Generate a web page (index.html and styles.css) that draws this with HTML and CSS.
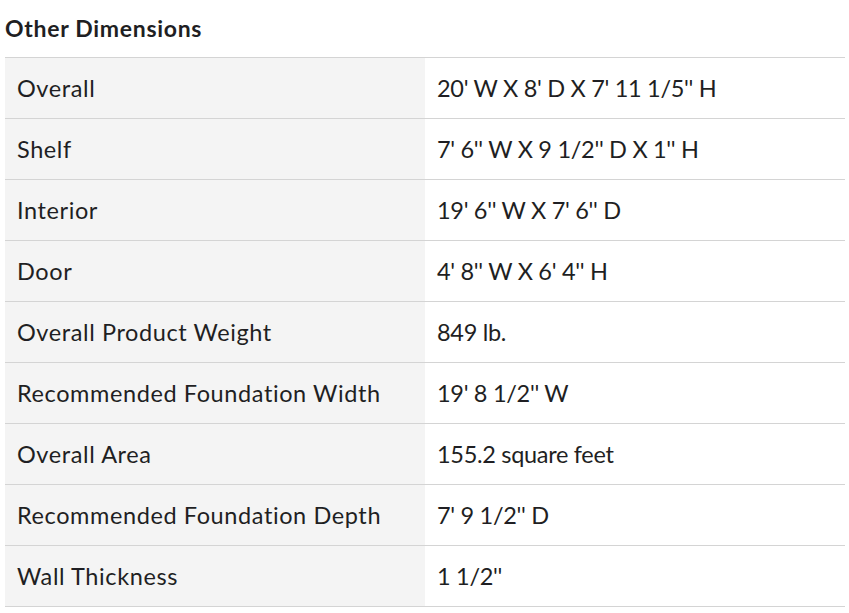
FILE: index.html
```html
<!DOCTYPE html>
<html>
<head>
<meta charset="utf-8">
<link rel="stylesheet" href="styles.css">
</head>
<body>
<section class="dims">
  <h2 class="dims-title">Other Dimensions</h2>
  <table class="dims-table">
    <tr><th>Overall</th><td>20' W X 8' D X 7' 11 1/5'' H</td></tr>
    <tr><th>Shelf</th><td>7' 6'' W X 9 1/2'' D X 1'' H</td></tr>
    <tr><th>Interior</th><td>19' 6'' W X 7' 6'' D</td></tr>
    <tr><th>Door</th><td>4' 8'' W X 6' 4'' H</td></tr>
    <tr><th>Overall Product Weight</th><td>849 lb.</td></tr>
    <tr><th>Recommended Foundation Width</th><td>19' 8 1/2'' W</td></tr>
    <tr><th>Overall Area</th><td>155.2 square feet</td></tr>
    <tr><th>Recommended Foundation Depth</th><td>7' 9 1/2'' D</td></tr>
    <tr><th>Wall Thickness</th><td>1 1/2''</td></tr>
  </table>
</section>
</body>
</html>
```
FILE: styles.css
```css
html, body {
  margin: 0;
  padding: 0;
  background: #fff;
}
body {
  font-family: "Lato", "Open Sans", sans-serif;
  color: #1f1f23;
}
.dims {
  padding: 0 4px 0 5px;
}
.dims-title {
  margin: 0;
  height: 57px;
  display: flex;
  align-items: center;
  font-size: 23px;
  font-weight: 700;
  letter-spacing: 0.7px;
  padding-bottom: 1px;
  box-sizing: border-box;
}
.dims-table {
  width: 100%;
  border-collapse: collapse;
  border-top: 1px solid #d4d4d4;
}
.dims-table tr {
  border-bottom: 1px solid #d4d4d4;
}
.dims-table th,
.dims-table td {
  height: 61px;
  padding: 0 12px;
  font-size: 23.5px;
  font-weight: 400;
  text-align: left;
  vertical-align: middle;
  box-sizing: border-box;
}
.dims-table th {
  width: 420px;
  background: #f4f4f4;
  letter-spacing: 0.6px;
}
.dims-table td {
  letter-spacing: -0.3px;
}
```
